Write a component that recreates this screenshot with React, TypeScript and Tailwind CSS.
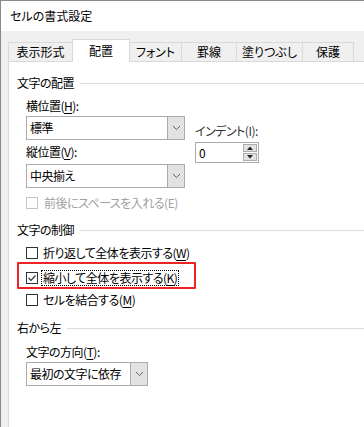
import React from "react";

const Chevron = () => (
  <svg width="9" height="6" viewBox="0 0 9 6">
    <polyline points="1,1 4.5,4.5 8,1" fill="none" stroke="#606060" strokeWidth="1" />
  </svg>
);

function Combo({ className, text }: { className: string; text: string }) {
  return (
    <div className={"flex h-[24px] border border-[#acacac] bg-white " + className}>
      <div className="flex-1 flex items-center pl-[3px] text-[12px] text-black">{text}</div>
      <div className="w-[17px] bg-[#e2e2e2] border-l border-[#acacac] flex items-center justify-center">
        <Chevron />
      </div>
    </div>
  );
}

function Header({ text, className }: { text: string; className: string }) {
  return (
    <div className={"flex items-center h-[16px] " + className}>
      <span className="text-[12px] leading-[16px] text-black whitespace-nowrap">{text}</span>
      <div className="flex-1 h-px bg-[#dcdcdc] ml-[6px]" />
    </div>
  );
}

const U = ({ c }: { c: string }) => <span className="underline underline-offset-[2px]">{c}</span>;

function CheckBox({ checked, disabled }: { checked?: boolean; disabled?: boolean }) {
  return (
    <div
      className={
        "w-[12px] h-[12px] border bg-white flex items-center justify-center shrink-0 " +
        (disabled ? "border-[#c4c4c4]" : "border-[#333333]")
      }
    >
      {checked && (
        <svg width="10" height="10" viewBox="0 0 10 10">
          <polyline points="1.5,5 4,7.5 8.5,2.5" fill="none" stroke="#333333" strokeWidth="1.2" />
        </svg>
      )}
    </div>
  );
}

export default function App() {
  const tabs = [
    { t: "表示形式", w: "w-[65px]" },
    { t: "配置", w: "w-[58px]", sel: true },
    { t: "フォント", w: "w-[53px]" },
    { t: "罫線", w: "w-[56px]" },
    { t: "塗りつぶし", w: "w-[67px]" },
    { t: "保護", w: "w-[52px]" },
  ];
  return (
    <div className="w-[364px] h-[427px] overflow-hidden bg-[#f0f0f0] border-l border-t border-[#8a8a8a] font-['Noto_Sans_CJK_JP','Noto_Sans',sans-serif] [font-feature-settings:'palt'] text-[12px] text-black flex flex-col">
      <div className="h-[30px] shrink-0 bg-white flex items-center pl-[9px] text-[12px]">セルの書式設定</div>
      <div className="flex-1 flex flex-col pl-[7px] pt-[8px]">
        <div className="flex items-end h-[22px]">
          {tabs.map((tb, i) => (
            <div
              key={i}
              className={
                "flex items-center justify-center border-l border-t border-r border-[#d9d9d9] text-[12px] " +
                tb.w +
                " " +
                (i > 0 ? "-ml-px " : "") +
                (tb.sel ? "h-[23px] bg-white relative z-10 -mb-px pb-[1px]" : "h-[19px] bg-[#f0f0f0]")
              }
            >
              {tb.t}
            </div>
          ))}
        </div>
        <div className="flex-1 bg-white border-l border-t border-[#d9d9d9] pl-[8px] flex flex-col tracking-[-0.5px]">
          <Header text="文字の配置" className="mt-[13px]" />
          <div className="flex ml-[9px]">
            <div className="w-[159px] flex flex-col">
              <div className="h-[16px] leading-[16px] mt-[7px]">
                横位置(<U c="H" />):
              </div>
              <Combo className="w-[159px] mt-[2px]" text="標準" />
              <div className="h-[16px] leading-[16px] mt-[4px]">
                縦位置(<U c="V" />):
              </div>
              <Combo className="w-[159px] mt-[4px]" text="中央揃え" />
            </div>
            <div className="ml-[10px] flex flex-col pt-[32px]">
              <div className="h-[16px] leading-[16px] text-[#333]">インデント(I):</div>
              <div className="mt-[3px] w-[64px] h-[21px] border border-[#acacac] bg-white flex items-center">
                <span className="pl-[3px] flex-1">0</span>
                <div className="flex flex-col mr-[1px] gap-[1px]">
                  <div className="w-[14px] h-[8px] bg-[#e2e2e2] border border-[#adadad] flex items-center justify-center">
                    <svg width="6" height="4" viewBox="0 0 6 4">
                      <polygon points="0,4 3,0.5 6,4" fill="#222" />
                    </svg>
                  </div>
                  <div className="w-[14px] h-[8px] bg-[#e2e2e2] border border-[#adadad] flex items-center justify-center">
                    <svg width="6" height="4" viewBox="0 0 6 4">
                      <polygon points="0,0 6,0 3,3.5" fill="#222" />
                    </svg>
                  </div>
                </div>
              </div>
            </div>
          </div>
          <div className="flex items-center h-[16px] ml-[9px] mt-[7px]">
            <CheckBox disabled />
            <span className="ml-[6px] text-[#a0a0a0] leading-[16px]">前後にスペースを入れる(E)</span>
          </div>
          <Header text="文字の制御" className="mt-[11px]" />
          <div className="flex items-center h-[16px] ml-[9px] mt-[7px]">
            <CheckBox />
            <span className="ml-[5px] leading-[16px]">
              折り返して全体を表示する(<U c="W" />)
            </span>
          </div>
          <div className="relative flex items-center h-[16px] ml-[9px] mt-[9px]">
            <div className="absolute left-[-9px] top-[-8px] w-[179px] h-[27px] border-2 border-[#ee2424] rounded-[1px]" />
            <CheckBox checked />
            <span className="ml-[3px] px-[1px] leading-[14px] border border-dotted border-black">
              縮小して全体を表示する(<U c="K" />)
            </span>
          </div>
          <div className="flex items-center h-[16px] ml-[9px] mt-[6px]">
            <CheckBox />
            <span className="ml-[5px] leading-[16px]">
              セルを結合する(<U c="M" />)
            </span>
          </div>
          <Header text="右から左" className="mt-[12px]" />
          <div className="ml-[9px] flex flex-col">
            <div className="h-[16px] leading-[16px] mt-[8px]">
              文字の方向(<U c="T" />):
            </div>
            <Combo className="w-[122px] mt-[2px]" text="最初の文字に依存" />
          </div>
        </div>
      </div>
    </div>
  );
}
